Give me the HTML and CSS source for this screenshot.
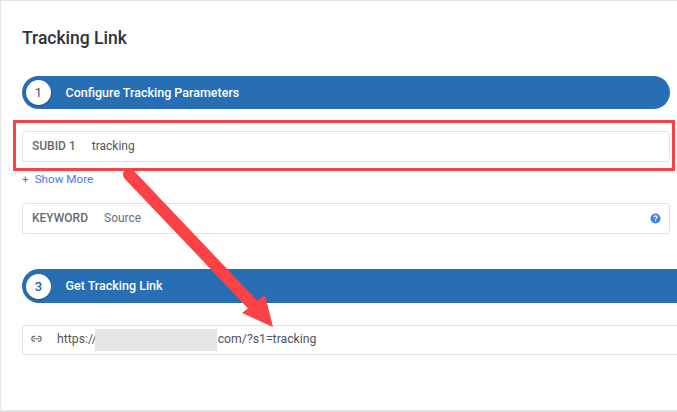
FILE: index.html
```html
<!DOCTYPE html>
<html lang="en">
<head>
<meta charset="utf-8">
<title>Tracking Link</title>
<link rel="stylesheet" href="styles.css">
</head>
<body>
<main class="card">
  <h1 class="title">Tracking Link</h1>

  <div class="step step-first">
    <span class="step-num">1</span>
    <span class="step-label">Configure Tracking Parameters</span>
  </div>

  <div class="field field-subid">
    <span class="field-label">SUBID 1</span>
    <span class="field-value field-value-dark">tracking</span>
  </div>

  <div class="show-more"><span class="plus">+</span><span>Show More</span></div>

  <div class="field field-keyword">
    <span class="field-label">KEYWORD</span>
    <span class="field-value">Source</span>
    <svg class="help" viewBox="0 0 12 12" width="11" height="11" aria-hidden="true">
      <circle cx="6" cy="6" r="5.5" fill="#3b82f0"/>
      <path d="M4.2 4.7C4.2 3.7 5 3.1 6 3.1C7 3.1 7.8 3.7 7.8 4.6C7.8 5.7 6.1 5.8 6.1 7" fill="none" stroke="#fff" stroke-width="1.2"/>
      <rect x="5.4" y="7.9" width="1.3" height="1.3" fill="#fff"/>
    </svg>
  </div>

  <div class="step step-wide">
    <span class="step-num step-num-blue">3</span>
    <span class="step-label">Get Tracking Link</span>
  </div>

  <div class="field field-link">
    <svg class="link-icon" viewBox="0 0 12 8" width="11" height="8" aria-hidden="true">
      <path d="M4.500 1.200H3.200C2 1.200 1 2.200 1 3.500V4C1 5.300 2 6.300 3.200 6.300H4.500M7.500 1.200H8.800C10 1.200 11 2.200 11 3.500V4C11 5.300 10 6.300 8.800 6.300H7.500M2.800 3.750H9.200" fill="none" stroke="#6b6f78" stroke-width="1.300"/>
    </svg>
    <span class="link-text">https://</span><span class="redacted"></span><span class="link-text">com/?s1=tracking</span>
  </div>

  <div class="highlight"></div>
  <svg class="arrow" viewBox="0 0 677 412" width="677" height="412" aria-hidden="true">
    <line x1="129" y1="174.500" x2="256" y2="308" stroke="#fd4245" stroke-width="12" stroke-linecap="round"/>
    <polygon points="265,295 273,327 242,313" fill="#fd4245"/>
  </svg>
</main>
</body>
</html>
```

FILE: styles.css
```css
* {
  box-sizing: border-box;
}

html, body {
  margin: 0;
  padding: 0;
  background: #fff;
}

body {
  width: 677px;
  height: 412px;
  overflow: hidden;
  font-family: Roboto, "Liberation Sans", sans-serif;
}

.card {
  position: relative;
  width: 700px;
  height: 412px;
  padding: 27px 0 0 22px;
  border: 1px solid #e4e4e4;
  border-width: 1px 0 2px 1px;
  overflow: hidden;
}

.title {
  margin: 0 0 0 -1px;
  padding: 0;
  font-size: 17.5px;
  line-height: 21px;
  font-weight: 500;
  color: #2e3240;
}

.step {
  display: flex;
  align-items: center;
  height: 33px;
  border-radius: 17px;
  background: #286eb5;
  padding-left: 4px;
  margin-left: -1px;
}

.step-first {
  width: 648px;
  margin-top: 27px;
}

.step-wide {
  width: 680px;
  height: 34px;
  margin-top: 35px;
  border-radius: 17px 0 0 17px;
}

.step-num {
  display: flex;
  align-items: center;
  justify-content: center;
  width: 25px;
  height: 25px;
  border-radius: 50%;
  background: #fff;
  color: #4b5563;
  font-size: 13px;
  box-shadow: 0 1px 2px rgba(0, 0, 0, 0.25);
}

.step-num-blue {
  color: #2a5fa8;
  font-weight: 500;
}

.step-label {
  margin-left: 14.5px;
  padding-bottom: 1px;
  color: #fff;
  font-size: 12.5px;
  font-weight: 500;
}

.field {
  display: flex;
  align-items: center;
  height: 31px;
  margin-left: -1px;
  border: 1px solid #e3e3e3;
  border-radius: 3px;
  background: #fff;
  font-size: 12px;
}

.field-subid {
  width: 648px;
  margin-top: 22px;
  padding: 0 0 1px 9px;
}

.field-keyword {
  width: 648px;
  margin-top: 17px;
  padding: 0 8px 1px 9px;
}

.field-link {
  width: 680px;
  height: 30px;
  margin-top: 22px;
  padding: 0 0 2px 8px;
}

.field-label {
  font-weight: 500;
  color: #666a72;
}

.field-value {
  margin-left: 16px;
  color: #6b6f78;
}

.field-value-dark {
  color: #53575f;
}

.help {
  margin-left: auto;
}

.show-more {
  display: flex;
  gap: 6px;
  margin: 10px 0 0 -1px;
  font-size: 11.7px;
  line-height: 14px;
  color: #4a78ee;
}

.plus {
  color: #3f6fe0;
}

.link-icon {
  flex: none;
  margin-right: 15px;
}

.link-text {
  color: #50545c;
  font-size: 12.25px;
}

.redacted {
  width: 122px;
  height: 22px;
  margin: 2px 1px 0 -2px;
  background: #e5e6e8;
}

.highlight {
  position: absolute;
  left: 12px;
  top: 119px;
  width: 662px;
  height: 51px;
  border: 3px solid #fd4245;
}

.arrow {
  position: absolute;
  left: -1px;
  top: -1px;
}
```
